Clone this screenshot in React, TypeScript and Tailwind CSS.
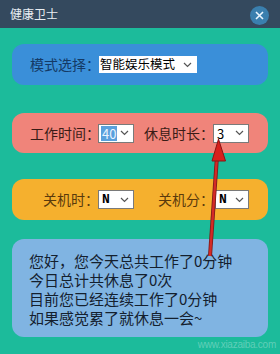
import React from "react";

const Chevron = () => (
  <svg width="9" height="6" viewBox="0 0 9 6" className="shrink-0">
    <path d="M1 1 L4.5 4.5 L8 1" fill="none" stroke="#555" strokeWidth="1.2" />
  </svg>
);

const Sel = ({ w, value, hl, mono }: { w: string; value: string; hl?: boolean; mono?: boolean }) => (
  <div className={`${w} h-[19px] shrink-0 bg-white border border-[#7a7a7a] flex items-center justify-between pl-[2px] pr-[4px]`}>
    <span
      className={`text-[13px] leading-[15px] px-[1px] whitespace-nowrap ${hl ? "bg-[#5aa0dc] text-[#eaf4ff]" : "text-black"} ${mono ? "font-bold" : ""}`}
      style={mono ? { fontFamily: '"Liberation Mono", monospace' } : undefined}
    >
      {value}
    </span>
    <Chevron />
  </div>
);

export default function App() {
  const cjk = { fontFamily: '"Noto Sans CJK SC", "Noto Sans", sans-serif' };
  return (
    <div className="relative w-[280px] h-[354px] bg-[#1cbb9b] overflow-hidden whitespace-nowrap" style={cjk}>
      <div className="h-[28px] bg-[#34495e] flex items-center justify-between pl-[10px] pr-[11px]">
        <span className="text-[12px] text-[#e8edf2] leading-none">健康卫士</span>
        <div className="w-[19px] h-[19px] rounded-full bg-[#3a7fae] flex items-center justify-center mt-[2px]">
          <svg width="9" height="9" viewBox="0 0 9 9">
            <path d="M1 1 L8 8 M8 1 L1 8" stroke="#eaf6ff" strokeWidth="1.6" />
          </svg>
        </div>
      </div>

      <div className="mx-[12px] mt-[16px] h-[41px] rounded-[12px] bg-[#3a8fd9] flex items-center pl-[18px]">
        <span className="text-[14px] text-[#143a66] w-[69px] shrink-0">模式选择：</span>
        <div className="w-[98px] h-[17px] shrink-0 bg-white flex items-center justify-between pl-[1px] pr-[5px]">
          <span className="text-[12.5px] leading-none text-black">智能娱乐模式</span>
          <Chevron />
        </div>
      </div>

      <div className="mx-[12px] mt-[28px] h-[40px] rounded-[12px] bg-[#f0847a] flex items-center pl-[18px]">
        <span className="text-[14px] text-[#3a1c16] w-[68px] shrink-0">工作时间：</span>
        <Sel w="w-[36px]" value="40" hl />
        <span className="text-[14px] text-[#3a1c16] ml-[10px] w-[69px] shrink-0">休息时长：</span>
        <Sel w="w-[36px]" value="3" />
      </div>

      <div className="mx-[12px] mt-[26px] h-[41px] rounded-[12px] bg-[#f5b02e] flex items-center pl-[31px]">
        <span className="text-[14px] text-[#5a3a0c] w-[55px] shrink-0">关机时：</span>
        <Sel w="w-[36px]" value="N" mono />
        <span className="text-[14px] text-[#5a3a0c] ml-[24px] w-[57px] shrink-0">关机分：</span>
        <Sel w="w-[34px]" value="N" mono />
      </div>

      <div className="mx-[12px] mt-[19px] h-[98px] rounded-[12px] bg-[#80b4e2] pl-[17px] pt-[12px] text-[15px] leading-[19px] text-[#14202e]">
        <div>您好，您今天总共工作了0分钟</div>
        <div>今日总计共休息了0次</div>
        <div>目前您已经连续工作了0分钟</div>
        <div>如果感觉累了就休息一会~</div>
      </div>

      <div className="absolute right-[4px] bottom-[2px] text-[10px] text-white/30 tracking-tight" style={{ fontFamily: '"Liberation Sans", sans-serif' }}>
        www.xiazaiba.com
      </div>

      <svg className="absolute left-0 top-0" width="280" height="354" viewBox="0 0 280 354">
        <line x1="210" y1="256" x2="217" y2="156" stroke="#7a1a1a" strokeWidth="4" />
        <line x1="210" y1="256" x2="217" y2="156" stroke="#d42a26" strokeWidth="2.4" />
        <path d="M218.5 139 L212 161 L225.5 161 Z" fill="#d8201c" stroke="#8a1414" strokeWidth="1" />
      </svg>
    </div>
  );
}
